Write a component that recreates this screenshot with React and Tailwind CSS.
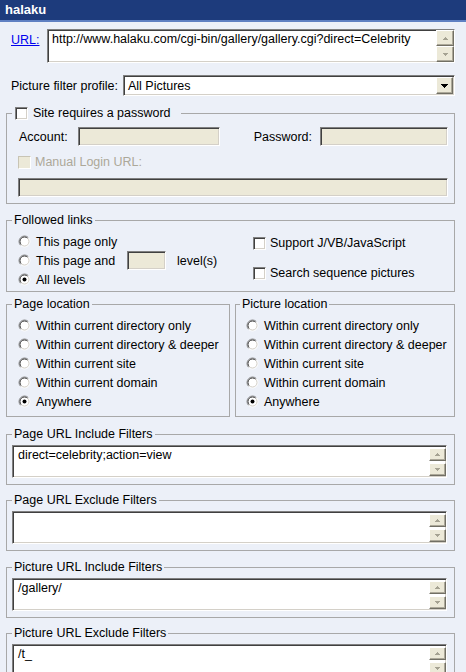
import React from 'react';

// classic 3D edges
const sunken =
  'border border-t-[#808080] border-l-[#808080] border-b-white border-r-white shadow-[inset_1px_1px_0_#404040,inset_-1px_-1px_0_#d4d0c8]';
const raised =
  'bg-[#ece9d8] border border-t-white border-l-white border-b-[#716f64] border-r-[#716f64] shadow-[inset_-1px_-1px_0_#aca899]';

const Arrow = ({ up, color = '#a5a292' }) => (
  <svg width="5" height="3" viewBox="0 0 5 3" shapeRendering="crispEdges">
    <path d={up ? 'M2 0h1v1h-1z M1 1h3v1h-3z M0 2h5v1h-5z' : 'M0 0h5v1h-5z M1 1h3v1h-3z M2 2h1v1h-1z'} fill={color} />
  </svg>
);

const Radio = ({ checked }) => (
  <svg width="13" height="13" viewBox="0 0 13 13" className="shrink-0">
    <circle cx="6.5" cy="6.5" r="5" fill="#fff" />
    <path d="M2.611 10.389 A5.5 5.5 0 0 1 10.389 2.611" stroke="#808080" fill="none" />
    <path d="M3.318 9.682 A4.5 4.5 0 0 1 9.682 3.318" stroke="#404040" fill="none" />
    <path d="M10.389 2.611 A5.5 5.5 0 0 1 2.611 10.389" stroke="#ffffff" fill="none" />
    <path d="M9.682 3.318 A4.5 4.5 0 0 1 3.318 9.682" stroke="#d4d0c8" fill="none" />
    {checked && <circle cx="6.5" cy="6.5" r="2" fill="#000" />}
  </svg>
);

const Check = ({ disabled }) => (
  <div
    className={
      disabled
        ? 'w-[13px] h-[13px] shrink-0 bg-[#ece9d8] border border-t-[#c8c4b4] border-l-[#c8c4b4] border-b-white border-r-white'
        : `w-[13px] h-[13px] shrink-0 bg-white ${sunken}`
    }
  />
);

const ScrollBtns = ({ h }) => (
  <div className="flex flex-col gap-[2px] pt-[2px]">
    <div className={`w-[17px] ${h} flex items-center justify-center ${raised}`}>
      <Arrow up />
    </div>
    <div className={`w-[17px] ${h} flex items-center justify-center ${raised}`}>
      <Arrow />
    </div>
  </div>
);

const Group = ({ legend, className = '', legendClass = 'ml-[5px] px-[2px]', children }) => (
  <fieldset className={`border border-[#a8a8a8] ${className}`}>
    <legend className={`h-[14px] leading-[14px] ${legendClass}`}>{legend}</legend>
    {children}
  </fieldset>
);

const RadioRow = ({ label, checked }) => (
  <div className="h-[19px] flex items-center">
    <Radio checked={checked} />
    <span className="ml-[5px]">{label}</span>
  </div>
);

const FilterBox = ({ legend, value, className = '' }) => (
  <Group legend={legend} className={className}>
    <div className="pt-[4px] pl-[5px] pr-[7px] pb-[6px]">
      <div className={`h-[33px] flex bg-white ${sunken}`}>
        <div className="flex-1 pl-[5px] pt-[2px]">{value}</div>
        <ScrollBtns h="h-[13px]" />
      </div>
    </div>
  </Group>
);

const locations = [
  'Within current directory only',
  'Within current directory & deeper',
  'Within current site',
  'Within current domain',
  'Anywhere',
];

export default function App() {
  return (
    <div className="w-[466px] h-[672px] overflow-hidden bg-[#ecf0f8] text-[12.5px] leading-[14px] text-black font-['Liberation_Sans',Arial,sans-serif]">
      <div className="h-[20px] bg-[#1d3b7c] pl-[5px] text-[13px] font-bold leading-[20px] text-white">halaku</div>
      <div className="h-[2px] bg-[#5f80c2]" />

      <div className="pl-[6px] pr-[11px]">
        {/* url */}
        <div className="mt-[7px] flex">
          <a href="#" className="mt-[4px] ml-[5px] w-[36px] text-[#0000ee] underline">URL:</a>
          <div className={`flex-1 h-[34px] flex bg-white ${sunken}`}>
            <div className="flex-1 pl-[4px] pt-[2px]">http://www.halaku.com/cgi-bin/gallery/gallery.cgi?direct=Celebrity</div>
            <div className="flex flex-col">
              <div className={`w-[18px] h-[16px] flex items-center justify-center ${raised}`}>
                <Arrow up />
              </div>
              <div className={`w-[18px] h-[16px] flex items-center justify-center ${raised}`}>
                <Arrow />
              </div>
            </div>
          </div>
        </div>

        {/* profile */}
        <div className="mt-[12px] flex items-center">
          <span className="w-[117px] pl-[5px]">Picture filter profile:</span>
          <div className={`flex-1 h-[21px] flex items-center bg-white ${sunken}`}>
            <span className="flex-1 pl-[4px]">All Pictures</span>
            <div className={`w-[17px] h-[17px] mr-[1px] flex items-center justify-center ${raised}`}>
              <svg width="7" height="4" viewBox="0 0 7 4" shapeRendering="crispEdges">
                <path d="M0 0h7v1h-7z M1 1h5v1h-5z M2 2h3v1h-3z M3 3h1v1h-1z" fill="#000" />
              </svg>
            </div>
          </div>
        </div>

        {/* password */}
        <Group
          className="mt-[10px]"
          legendClass="ml-[5px] pl-[3px] pr-[10px]"
          legend={
            <span className="flex items-center">
              <Check />
              <span className="ml-[5px]">Site requires a password</span>
            </span>
          }
        >
          <div className="pt-[7px] pl-[11px] pr-[6px] pb-[6px]">
            <div className="flex items-center">
              <span className="w-[60px] pl-[1px]">Account:</span>
              <div className={`w-[142px] h-[19px] bg-[#ece9d8] ${sunken}`} />
              <span className="flex-1 text-right pr-[8px]">Password:</span>
              <div className={`w-[128px] h-[19px] bg-[#ece9d8] ${sunken}`} />
            </div>
            <div className="mt-[9px] flex items-center">
              <Check disabled />
              <span className="ml-[4px] text-[#aca899]">Manual Login URL:</span>
            </div>
            <div className={`mt-[9px] h-[19px] bg-[#ece9d8] ${sunken}`} />
          </div>
        </Group>

        {/* followed links */}
        <Group legend="Followed links" className="mt-[9px]">
          <div className="flex pl-[11px] pb-[2px]">
            <div className="w-[235px] pt-[5px]">
              <RadioRow label="This page only" />
              <div className="h-[19px] flex items-center">
                <Radio />
                <span className="ml-[5px] w-[91px]">This page and</span>
                <div className={`w-[39px] h-[19px] bg-[#ece9d8] ${sunken}`} />
                <span className="ml-[11px]">level(s)</span>
              </div>
              <RadioRow label="All levels" checked />
            </div>
            <div className="pt-[9px] flex flex-col gap-[16px]">
              <div className="flex items-center">
                <Check />
                <span className="ml-[4px]">Support J/VB/JavaScript</span>
              </div>
              <div className="flex items-center">
                <Check />
                <span className="ml-[4px]">Search sequence pictures</span>
              </div>
            </div>
          </div>
        </Group>

        {/* locations */}
        <div className="mt-[5px] flex gap-[5px]">
          <Group legend="Page location" className="w-[224px]">
            <div className="pt-[5px] pl-[11px] pb-[5px]">
              {locations.map((l) => (
                <RadioRow key={l} label={l} checked={l === 'Anywhere'} />
              ))}
            </div>
          </Group>
          <Group legend="Picture location" className="flex-1" legendClass="ml-[4px] px-[2px]">
            <div className="pt-[5px] pl-[10px] pb-[5px]">
              {locations.map((l) => (
                <RadioRow key={l} label={l} checked={l === 'Anywhere'} />
              ))}
            </div>
          </Group>
        </div>

        <FilterBox legend="Page URL Include Filters" value="direct=celebrity;action=view" className="mt-[10px]" />
        <FilterBox legend="Page URL Exclude Filters" value="" className="mt-[8px]" />
        <FilterBox legend="Picture URL Include Filters" value="/gallery/" className="mt-[9px]" />
        <FilterBox legend="Picture URL Exclude Filters" value="/t_" className="mt-[8px]" />
      </div>
    </div>
  );
}
